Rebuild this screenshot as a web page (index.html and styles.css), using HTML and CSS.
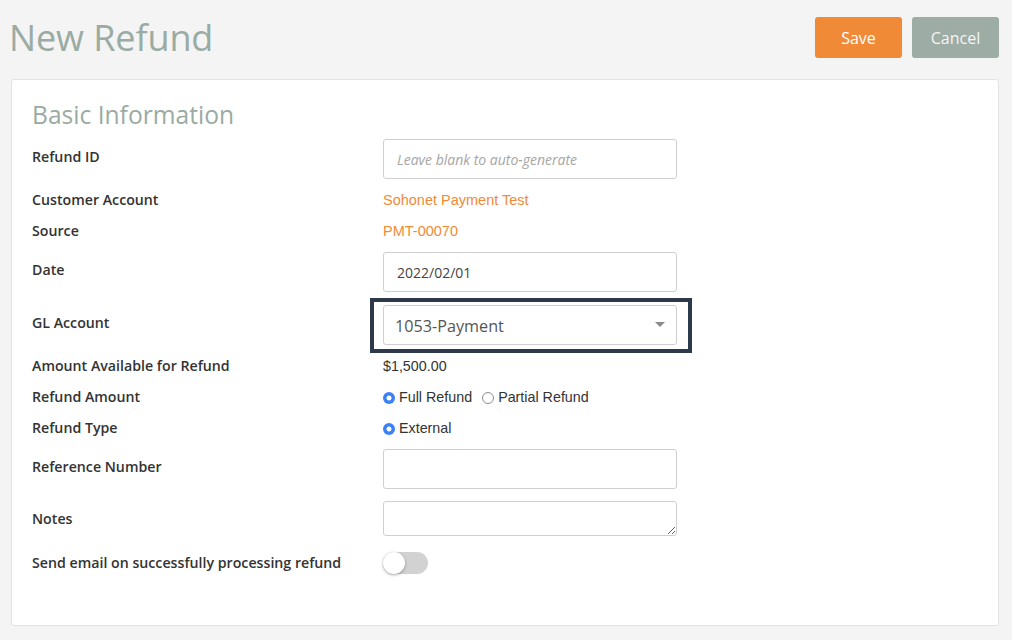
FILE: index.html
```html
<!DOCTYPE html>
<html>
<head>
<meta charset="utf-8">
<link rel="stylesheet" href="styles.css">
</head>
<body>
<div class="page">
  <header class="header">
    <h1 class="title">New Refund</h1>
    <div class="actions">
      <button class="btn btn-save">Save</button>
      <button class="btn btn-cancel">Cancel</button>
    </div>
  </header>
  <section class="card">
    <h2 class="section-title">Basic Information</h2>
    <div class="form">
      <div class="row row-input">
        <label class="label">Refund ID</label>
        <div class="field"><input class="input" type="text" placeholder="Leave blank to auto-generate"></div>
      </div>
      <div class="row row-text">
        <label class="label">Customer Account</label>
        <div class="field link">Sohonet Payment Test</div>
      </div>
      <div class="row row-text">
        <label class="label">Source</label>
        <div class="field link">PMT-00070</div>
      </div>
      <div class="row row-input">
        <label class="label">Date</label>
        <div class="field"><input class="input input-value" type="text" value="2022/02/01"></div>
      </div>
      <div class="row row-input row-gl">
        <label class="label">GL Account</label>
        <div class="field select-wrap">
          <div class="select">
            <span>1053-Payment</span>
            <span class="caret"></span>
          </div>
          <div class="highlight"></div>
        </div>
      </div>
      <div class="row row-text">
        <label class="label">Amount Available for Refund</label>
        <div class="field value">$1,500.00</div>
      </div>
      <div class="row row-text">
        <label class="label">Refund Amount</label>
        <div class="field value radios">
          <span class="radio checked"></span><span class="radio-label">Full Refund</span>
          <span class="radio"></span><span class="radio-label">Partial Refund</span>
        </div>
      </div>
      <div class="row row-text">
        <label class="label">Refund Type</label>
        <div class="field value radios">
          <span class="radio checked"></span><span class="radio-label">External</span>
        </div>
      </div>
      <div class="row row-input">
        <label class="label">Reference Number</label>
        <div class="field"><input class="input" type="text"></div>
      </div>
      <div class="row row-notes">
        <label class="label">Notes</label>
        <div class="field"><textarea class="textarea"></textarea></div>
      </div>
      <div class="row row-toggle">
        <label class="label">Send email on successfully processing refund</label>
        <div class="field"><span class="toggle"><span class="knob"></span></span></div>
      </div>
    </div>
  </section>
</div>
</body>
</html>
```
FILE: styles.css
```css
* { box-sizing: border-box; }
html, body { margin: 0; padding: 0; }
body {
  background: #f4f4f4;
  font-family: "Open Sans", "Liberation Sans", sans-serif;
  color: #333;
  width: 1012px;
  height: 640px;
  overflow: hidden;
}
.page {
  padding: 17px 13px 0 11px;
}
.header {
  display: flex;
  justify-content: space-between;
  align-items: flex-start;
  height: 41px;
  margin-bottom: 21px;
}
.title {
  margin: 0 0 0 -2px;
  font-size: 36px;
  font-weight: 400;
  line-height: 42px;
  color: #9aaba4;
  letter-spacing: -0.1px;
}
.actions {
  display: flex;
  gap: 10px;
}
.btn {
  width: 87px;
  height: 41px;
  border: none;
  border-radius: 3px;
  font-family: "Open Sans", sans-serif;
  font-size: 16px;
  color: #fff;
  padding: 0;
}
.btn-save { background: #f08a37; }
.btn-cancel { background: #9eaca6; color: #f3f5f4; }
.card {
  background: #fff;
  border: 1px solid #e3e3e3;
  border-radius: 3px;
  height: 547px;
  padding: 19px 20px 0 20px;
}
.section-title {
  margin: 0 0 8px 0;
  font-size: 24.6px;
  font-weight: 400;
  line-height: 32px;
  color: #9aaba4;
}
.form {
  display: flex;
  flex-direction: column;
  gap: 11px;
}
.row {
  display: grid;
  grid-template-columns: 351px 294px;
  align-items: center;
}
.row-input { height: 40px; }
.row-text { height: 20px; }
.row-gl { margin-top: 2px; }
.row-notes { height: 35px; margin-top: 1px; }
.row-toggle { height: 22px; margin-top: 5px; }
.label {
  font-size: 14.2px;
  font-weight: 600;
  color: #333;
  line-height: 18px;
  margin-top: -5px;
}
.row-text .label { margin-top: -1px; }
.row-notes .label { margin-top: 1px; }
.row-toggle .label { margin-top: -1px; }
.field { position: relative; }
.input {
  display: block;
  width: 294px;
  height: 40px;
  border: 1px solid #cfcfcf;
  border-radius: 3px;
  padding: 0 13px;
  font-family: "Open Sans", sans-serif;
  font-size: 14px;
  color: #444;
  outline: none;
}
.input::placeholder {
  font-style: italic;
  color: #a6a6a6;
}
.input-value { color: #444; }
.link {
  font-family: "Liberation Sans", Arial, sans-serif;
  font-size: 14.5px;
  color: #f08a37;
}
.value {
  font-family: "Liberation Sans", Arial, sans-serif;
  font-size: 14.3px;
  color: #333;
}
.select {
  display: flex;
  justify-content: space-between;
  align-items: center;
  width: 294px;
  height: 40px;
  border: 1px solid #cfcfcf;
  border-radius: 3px;
  padding: 2px 11px 0 11px;
  font-size: 16.2px;
  color: #555;
}
.caret {
  width: 0;
  height: 0;
  border-left: 5px solid transparent;
  border-right: 5px solid transparent;
  border-top: 5px solid #8a8a8a;
  margin-top: -3px;
}
.highlight {
  position: absolute;
  left: -13px;
  top: -7px;
  width: 322px;
  height: 55px;
  border: 4px solid #2e3a4b;
  pointer-events: none;
}
.radios {
  display: flex;
  align-items: center;
}
.radio {
  display: inline-block;
  width: 12px;
  height: 12px;
  border-radius: 50%;
  border: 1px solid #8d8d8d;
  background: #fff;
  margin-right: 4px;
  margin-top: 1px;
}
.radio.checked {
  border: none;
  background: radial-gradient(circle, #fff 0 2.2px, #3b82f6 2.8px);
}
.radio-label { margin-right: 10px; }
.textarea {
  display: block;
  width: 294px;
  height: 35px;
  border: 1px solid #cfcfcf;
  border-radius: 3px;
  resize: vertical;
  outline: none;
  font-family: "Open Sans", sans-serif;
}
.toggle {
  display: block;
  position: relative;
  width: 45px;
  height: 22px;
  border-radius: 11px;
  background: #d2d2d2;
}
.knob {
  position: absolute;
  left: 0;
  top: 0;
  width: 22px;
  height: 22px;
  border-radius: 50%;
  background: #fff;
  box-shadow: 0 1px 3px rgba(0,0,0,0.35);
}
```
